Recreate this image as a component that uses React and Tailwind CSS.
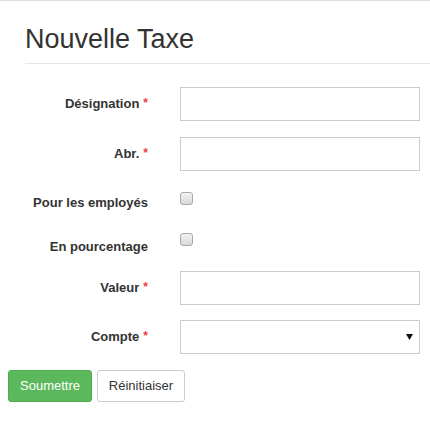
import React from 'react';

function Req() {
    return <span className="text-[#e8413b] text-[12px] align-top ml-[4px]">*</span>;
}

function Check({ offset }) {
    return (
        <div className={'ml-[32px] ' + offset}>
            <div className="w-[13px] h-[13px] rounded-[3px] border border-[#a9a9a9] bg-gradient-to-b from-[#f2f2f2] to-[#d9d9d9]"></div>
        </div>
    );
}

function Label({ children, required }) {
    return (
        <label className="w-[148px] shrink-0 text-right pt-[7px] leading-[19px] text-[13px] font-bold text-[#333]">
            {children}
            {required ? <Req /> : null}
        </label>
    );
}

export default function App() {
    return (
        <div
            className="w-[430px] h-[424px] bg-white border-t border-[#dcdcdc] overflow-hidden"
            style={{ fontFamily: '"Liberation Sans", Arial, sans-serif' }}
        >
            <div className="pl-[25px] pt-[24px]">
                <h3 className="text-[27px] leading-[28px] text-[#333] pb-[10px] border-b border-[#e5e5e5]">
                    Nouvelle Taxe
                </h3>
            </div>

            <form className="pt-[23px]">
                <div className="flex h-[34px] mb-[16px]">
                    <Label required>Désignation</Label>
                    <input className="ml-[32px] w-[240px] h-[34px] border border-[#ccc] outline-none" />
                </div>
                <div className="flex h-[34px] mb-[15px]">
                    <Label required>Abr.</Label>
                    <input className="ml-[32px] w-[240px] h-[34px] border border-[#ccc] outline-none" />
                </div>
                <div className="flex h-[29px] mb-[15px]">
                    <Label>Pour les employés</Label>
                    <Check offset="mt-[6px]" />
                </div>
                <div className="flex h-[26px] mb-[15px]">
                    <Label>En pourcentage</Label>
                    <Check offset="mt-[3px]" />
                </div>
                <div className="flex h-[34px] mb-[15px]">
                    <Label required>Valeur</Label>
                    <input className="ml-[32px] w-[240px] h-[34px] border border-[#ccc] outline-none" />
                </div>
                <div className="flex h-[34px] mb-[16px]">
                    <Label required>Compte</Label>
                    <div className="ml-[32px] w-[240px] h-[34px] border border-[#ccc] flex items-center justify-end pr-[6px]">
                        <svg width="7" height="6" viewBox="0 0 7 6">
                            <polygon points="0,0 7,0 3.5,6" fill="#111" />
                        </svg>
                    </div>
                </div>
                <div className="flex gap-[5px] pl-[8px]">
                    <button
                        type="button"
                        className="h-[32px] w-[84px] rounded-[3px] bg-[#5cb85c] border border-[#4cae4c] text-white text-[13px]"
                    >
                        Soumettre
                    </button>
                    <button
                        type="button"
                        className="h-[32px] w-[88px] rounded-[3px] bg-white border border-[#ccc] text-[#333] text-[13px]"
                    >
                        Réinitiaiser
                    </button>
                </div>
            </form>
        </div>
    );
}
